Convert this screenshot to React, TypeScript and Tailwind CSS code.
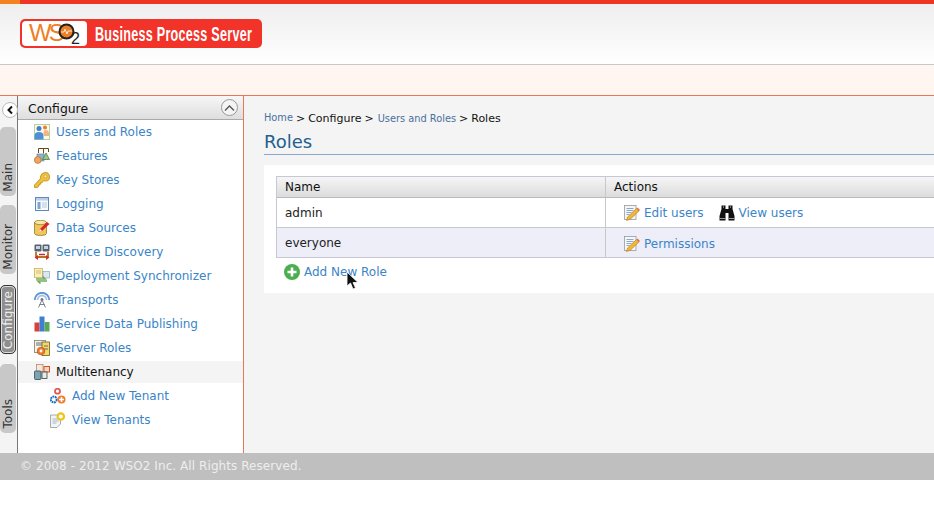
import { ReactNode } from "react";

const font = "font-['DejaVu_Sans',sans-serif]";

function UsersIcon() {
  return (
    <svg width="16" height="16" viewBox="0 0 16 16">
      <rect x="0.500" y="0.500" width="15" height="15" fill="#fff8ea" stroke="#b5d59a" />
      <circle cx="5" cy="4.500" r="2.500" fill="#3b7fcf" />
      <path d="M0.500 15.500v-4q0-3.500 4.500-3.500t4.500 3.500v4z" fill="#4d8fd8" />
      <circle cx="11" cy="3.500" r="2" fill="#ef7a2c" />
      <path d="M9.500 12V9q0-3 2.500-3t3 3v3z" fill="#f3b486" />
    </svg>
  );
}

function FeaturesIcon() {
  return (
    <svg width="16" height="16" viewBox="0 0 16 16">
      <path d="M4.500 5V0.500h10V4M9.500 0.500v5" fill="none" stroke="#6b4a12" />
      <rect x="3" y="6" width="7" height="7" fill="#8fb2d8" stroke="#5c7fa8" strokeWidth="0.600" />
      <path d="M12 5l3.500 6.500h-7z" fill="#9fc48a" stroke="#4c7d43" strokeWidth="0.800" />
      <circle cx="3.800" cy="12" r="3.400" fill="#eea55d" stroke="#b56f2c" strokeWidth="0.700" />
    </svg>
  );
}

function KeyIcon() {
  return (
    <svg width="16" height="16" viewBox="0 0 16 16">
      <path d="M0.500 13l6-6.500-.2-1.500Q7 1 11 0.500t4.500 4-4 4.500l-2-.2-1.500 2H6.500v1.500H5V14l-1.500 1.500H0.500z" fill="#f0bf3c" stroke="#b98a1f" strokeWidth="0.800" />
      <circle cx="11.500" cy="4.300" r="1.300" fill="#fff3c4" stroke="#b98a1f" strokeWidth="0.500" />
    </svg>
  );
}

function LoggingIcon() {
  return (
    <svg width="16" height="16" viewBox="0 0 16 16">
      <rect x="1.500" y="1.500" width="13" height="13" fill="#f6f9fd" stroke="#5f88bc" />
      <rect x="2" y="2" width="12" height="2.500" fill="#b9cfe8" />
      <rect x="3.500" y="6" width="3" height="7" fill="#7fa5d1" />
      <path d="M8 7h5M8 9h5M8 11h5" stroke="#b8c9dc" />
    </svg>
  );
}

function DataIcon() {
  return (
    <svg width="16" height="16" viewBox="0 0 16 16">
      <path d="M0.500 2.500v11q0 2 6 2t6-2v-11z" fill="#eec95a" stroke="#8f6b17" strokeWidth="0.700" />
      <ellipse cx="6.500" cy="2.500" rx="6" ry="2.200" fill="#f8e7a6" stroke="#8f6b17" strokeWidth="0.700" />
      <path d="M5 12l1-3 7-7 2.500 2-7.500 7z" fill="#d8262c" />
      <path d="M5 12l1-3 2 2z" fill="#fff" />
    </svg>
  );
}

function DiscoveryIcon() {
  return (
    <svg width="16" height="16" viewBox="0 0 16 16">
      <rect x="0.500" y="0.500" width="7" height="7" rx="1" fill="#59636e" />
      <rect x="8.500" y="0.500" width="7" height="7" rx="1" fill="#59636e" />
      <rect x="2" y="2" width="4" height="3" fill="#c2d2e2" />
      <rect x="10" y="2" width="4" height="3" fill="#c2d2e2" />
      <path d="M2 8v5h12V8" fill="none" stroke="#bd6c20" strokeWidth="1.800" />
      <path d="M5 10.500h6" stroke="#c8302c" strokeWidth="1.500" />
      <path d="M0.500 13.500L4 11v5zM15.500 13.500L12 11v5z" fill="#c8302c" />
    </svg>
  );
}

function DeployIcon() {
  return (
    <svg width="16" height="16" viewBox="0 0 16 16">
      <rect x="0.500" y="0.500" width="8" height="9" fill="#fbeeb8" stroke="#c2a94e" strokeWidth="0.700" />
      <rect x="9" y="3.500" width="6.500" height="6.500" fill="#dce8f0" stroke="#8aa5ba" strokeWidth="0.700" />
      <path d="M2 3h5M2 5h5" stroke="#c2a94e" strokeWidth="0.700" />
      <path d="M2 11h9l-2.500-2.500M13 13H4l2.500 2.500" fill="none" stroke="#74ad5c" strokeWidth="1.700" />
    </svg>
  );
}

function TransportIcon() {
  return (
    <svg width="16" height="16" viewBox="0 0 16 16">
      <path d="M0.800 8a7.200 7.200 0 0 1 14.400 0" fill="none" stroke="#5f93d6" strokeWidth="1.800" />
      <path d="M3.500 8a4.500 4.500 0 0 1 9 0" fill="none" stroke="#a6c4e8" strokeWidth="1.800" />
      <circle cx="8" cy="7.500" r="1.500" fill="#6d7680" />
      <path d="M8 8l-3.500 7.500M8 8l3.500 7.500M5.500 12.500h5" fill="none" stroke="#7a828a" />
    </svg>
  );
}

function PublishIcon() {
  return (
    <svg width="16" height="16" viewBox="0 0 16 16">
      <rect x="0.500" y="6.500" width="5" height="9" fill="#d9403a" />
      <rect x="5.500" y="0.500" width="5" height="15" fill="#3f7fcf" />
      <rect x="10.500" y="6" width="5" height="9.500" fill="#5aa75a" />
    </svg>
  );
}

function ServerRolesIcon() {
  return (
    <svg width="16" height="16" viewBox="0 0 16 16">
      <rect x="0.500" y="0.500" width="11" height="12" fill="#f4f4f0" stroke="#7c7c72" strokeWidth="0.800" />
      <rect x="8" y="2" width="7.500" height="13.500" fill="#f4d86a" stroke="#6b5b20" strokeWidth="0.800" />
      <path d="M2 3h6M2 5h6M10 6h4M10 9h4" stroke="#6b6b5e" />
      <circle cx="7" cy="11" r="3.800" fill="#ee7c2e" stroke="#b9501a" strokeWidth="0.700" />
      <circle cx="7" cy="11" r="1.400" fill="#fff" />
    </svg>
  );
}

function TenancyIcon() {
  return (
    <svg width="16" height="16" viewBox="0 0 16 16">
      <rect x="2.500" y="0.500" width="6.500" height="7" fill="#f7e6dc" stroke="#a9806a" strokeWidth="0.700" />
      <rect x="10" y="2.500" width="5.500" height="5.500" fill="#f9d5c3" stroke="#d2552a" strokeWidth="1" />
      <rect x="0.500" y="7" width="6.500" height="8.500" rx="1" fill="#7fa3ad" stroke="#3d5a66" strokeWidth="0.900" />
      <rect x="8" y="8" width="5" height="6.500" fill="#e5ece6" stroke="#3f3f3f" strokeWidth="0.800" />
    </svg>
  );
}

function AddTenantIcon() {
  return (
    <svg width="16" height="16" viewBox="0 0 16 16">
      <circle cx="7.500" cy="3.200" r="2.500" fill="#fff" stroke="#dd5c4c" strokeWidth="1.800" />
      <circle cx="3.800" cy="11.500" r="2.900" fill="#fff" stroke="#1e6fb8" strokeWidth="2" strokeDasharray="1.800 0.600" />
      <circle cx="11.500" cy="11.500" r="4" fill="#ee7c2e" />
      <path d="M11.500 9v5M9 11.500h5" stroke="#fff" strokeWidth="1.500" />
    </svg>
  );
}

function ViewTenantIcon() {
  return (
    <svg width="16" height="16" viewBox="0 0 16 16">
      <path d="M0.500 3h10v9l-3.500 3.500H0.500z" fill="#f2f4f6" stroke="#8f979f" strokeWidth="0.800" />
      <path d="M2.500 7h6M2.500 9h6M2.500 11h4" stroke="#8fa9c6" strokeWidth="0.800" />
      <circle cx="10.800" cy="4.500" r="3.200" fill="#fff" stroke="#efc514" strokeWidth="2.200" />
    </svg>
  );
}

function EditIcon() {
  return (
    <svg width="16" height="16" viewBox="0 0 16 16">
      <rect x="0.500" y="0.500" width="11.500" height="14" fill="#f5f6f7" stroke="#9a9a9a" strokeWidth="0.800" />
      <path d="M2.500 3.500h7M2.500 5.500h7M2.500 7.500h5M2.500 9.500h3" stroke="#6c96c8" strokeWidth="0.800" />
      <path d="M2.500 15.500l1-3.500 9-8.500 2.500 2.500-9 8.500z" fill="#f0b63a" stroke="#b9791a" strokeWidth="0.600" />
      <path d="M12.500 3.500l1-1 2.500 2.500-1 1z" fill="#e66b4a" />
    </svg>
  );
}

function BinocularsIcon() {
  return (
    <svg width="16" height="16" viewBox="0 0 16 16">
      <path d="M2.500 0.500h4v3.500h3V0.500h4V4l2 7v4.500H9.500V8h-3v7.500H0.500V11l2-7z" fill="#111" />
      <path d="M0.500 13.500h6M9.500 13.500h6" stroke="#9a9a9a" />
      <path d="M4.500 1v2M11.500 1v2" stroke="#777" />
    </svg>
  );
}

function WsoMark() {
  return (
    <span className="flex items-center h-[25px] w-[65px] bg-white rounded-[4px] relative shrink-0 ml-px">
      <span className="absolute left-[7px] top-0 text-[#ee7f24] text-[24px] tracking-[-3px] leading-[24px] font-['Liberation_Sans',sans-serif]">
        WS
      </span>
      <svg className="absolute left-[36px] top-[2px]" width="17" height="17" viewBox="0 0 17 17">
        <circle cx="8.500" cy="8.500" r="7" fill="#ee7f24" stroke="#222" strokeWidth="2" />
        <path d="M3 9h3l1-3 2 5 1-3h4" fill="none" stroke="#fff" strokeWidth="0.800" />
      </svg>
      <span className="absolute left-[49px] top-[10px] text-[#222] text-[16px] leading-[16px] font-['Liberation_Sans',sans-serif]">
        2
      </span>
    </span>
  );
}

function NavRow({
  icon,
  label,
  sub,
  active,
}: {
  icon: ReactNode;
  label: string;
  sub?: boolean;
  active?: boolean;
}) {
  return (
    <div className="h-[24px] py-px">
      <div
        className={`h-[22px] flex items-center gap-[6px] ${sub ? "pl-[32px]" : "pl-[16px]"} ${active ? "bg-[#f4f4f4] text-[#111]" : "text-[#3a85c8]"}`}
      >
        <span className="w-[16px] h-[16px] shrink-0">{icon}</span>
        <span className="whitespace-nowrap">{label}</span>
      </div>
    </div>
  );
}

function SideTab({
  label,
  mt,
  active,
}: {
  label: string;
  mt: string;
  active?: boolean;
}) {
  return (
    <div
      className={`${mt} h-[69px] w-[16px] rounded-[5px] flex items-end justify-center pb-[4px] ${active ? "bg-[#8e8e8e] border border-[#333] text-[#eee] shadow-[inset_0_0_0_1px_#ddd]" : "bg-[#c8c8c8] text-[#333]"}`}
    >
      <span className="[writing-mode:vertical-rl] rotate-180 whitespace-nowrap text-[12px] leading-[16px]">
        {label}
      </span>
    </div>
  );
}

export default function App() {
  return (
    <div className={`w-[934px] h-[531px] bg-white overflow-hidden text-[12px] text-[#222] ${font}`}>
      <div className="h-[4px] flex bg-[#ee3524]">
        <div className="w-[20px] bg-[#f58220]" />
      </div>
      <div className="h-[60px] bg-gradient-to-b from-[#eeeeee] to-white flex items-center pl-[20px] pb-px">
        <div className="w-[242px] h-[29px] bg-[#f1332a] rounded-[5px] flex items-center pl-px">
          <WsoMark />
          <span className="ml-[8px] text-white text-[20px] font-['Liberation_Sans',sans-serif] font-bold scale-x-[0.63] origin-left whitespace-nowrap tracking-[0.4px]">
            Business Process Server
          </span>
        </div>
      </div>
      <div className="h-[31px] bg-[#fff6f1] border-t border-[#c8c8c8]" />
      <div className="h-[358px] flex border-t border-[#ec7556]">
        <div className="w-[18px] shrink-0 bg-[#f4f4f4] border-r border-[#777] flex flex-col items-start">
          <div className="w-[16px] h-[16px] mt-[6px] ml-[2px] rounded-full bg-white border border-[#bbb] flex items-center justify-center">
            <svg width="8" height="10" viewBox="0 0 8 10">
              <path d="M6 1.500L2.500 5 6 8.500" fill="none" stroke="#111" strokeWidth="2" />
            </svg>
          </div>
          <div className="flex flex-col mt-[9px]">
            <SideTab label="Main" mt="mt-0" />
            <SideTab label="Monitor" mt="mt-[9px]" />
            <SideTab label="Configure" mt="mt-[11px]" active />
            <SideTab label="Tools" mt="mt-[10px]" />
          </div>
        </div>
        <div className="w-[226px] shrink-0 bg-white border-r border-[#ec7556]">
          <div className="h-[24px] bg-gradient-to-b from-[#f7f7f7] to-[#dedede] border-b border-[#aaa] flex items-center justify-between pl-[10px] pr-[5px] text-[#111] text-[12.400px]">
            <span className="mt-[3px]">Configure</span>
            <span className="w-[17px] h-[17px] rounded-full border border-[#999] bg-[#f4f4f4] flex items-center justify-center">
              <svg width="11" height="8" viewBox="0 0 11 8">
                <path d="M1 6.500l4.500-4.500 4.500 4.500" fill="none" stroke="#555" strokeWidth="1.300" />
              </svg>
            </span>
          </div>
          <NavRow icon={<UsersIcon />} label="Users and Roles" />
          <NavRow icon={<FeaturesIcon />} label="Features" />
          <NavRow icon={<KeyIcon />} label="Key Stores" />
          <NavRow icon={<LoggingIcon />} label="Logging" />
          <NavRow icon={<DataIcon />} label="Data Sources" />
          <NavRow icon={<DiscoveryIcon />} label="Service Discovery" />
          <NavRow icon={<DeployIcon />} label="Deployment Synchronizer" />
          <NavRow icon={<TransportIcon />} label="Transports" />
          <NavRow icon={<PublishIcon />} label="Service Data Publishing" />
          <NavRow icon={<ServerRolesIcon />} label="Server Roles" />
          <NavRow icon={<TenancyIcon />} label="Multitenancy" active />
          <NavRow icon={<AddTenantIcon />} label="Add New Tenant" sub />
          <NavRow icon={<ViewTenantIcon />} label="View Tenants" sub />
        </div>
        <div className="flex-1 bg-[#f4f4f4] pl-[20px] pt-[15px] min-w-0">
          <div className="h-[15px] mt-px flex items-center text-[11px] text-[#111] whitespace-nowrap">
            <span className="text-[#4a6f9e] text-[9.800px] -mt-[2px] mr-[3px]">Home</span>
            <span>&gt;</span>
            <span className="ml-[3px] mr-[3px]">Configure</span>
            <span>&gt;</span>
            <span className="text-[#4a6f9e] text-[9.800px] ml-[4px] mr-[3px]">Users and Roles</span>
            <span>&gt;</span>
            <span className="ml-[3px]">Roles</span>
          </div>
          <div className="h-[28px] pt-px text-[18px] leading-[28px] text-[#21608f] border-b border-[#8aa7cc]">
            Roles
          </div>
          <div className="mt-[10px] h-[128px] bg-white pl-[12px] pt-[11px]">
            <div className="border border-[#c8c8d4] border-r-0 text-[#222]">
              <div className="h-[21px] flex bg-gradient-to-b from-[#f6f6f6] to-[#dcdcdc] border-b border-[#bbb]">
                <div className="w-[329px] pl-[8px] border-r border-[#c8c8c8] flex items-center text-[#111]">Name</div>
                <div className="pl-[8px] flex items-center text-[#111]">Actions</div>
              </div>
              <div className="h-[30px] flex border-b border-[#c8c8d4]">
                <div className="w-[329px] pl-[8px] border-r border-[#c8c8c8] flex items-center">admin</div>
                <div className="pl-[18px] flex items-center text-[#3a85c8]">
                  <span className="w-[16px] h-[16px] mr-[4px]"><EditIcon /></span>
                  <span>Edit users</span>
                  <span className="w-[16px] h-[16px] ml-[16px] mr-[3px]"><BinocularsIcon /></span>
                  <span>View users</span>
                </div>
              </div>
              <div className="h-[29px] flex bg-[#eeeef9]">
                <div className="w-[329px] pl-[8px] border-r border-[#c8c8c8] flex items-center">everyone</div>
                <div className="pl-[18px] pt-[2px] flex items-center text-[#3a85c8]">
                  <span className="w-[16px] h-[16px] mr-[4px]"><EditIcon /></span>
                  <span>Permissions</span>
                </div>
              </div>
            </div>
            <div className="h-[27px] pl-[8px] flex items-center gap-[4px] text-[#3a85c8] relative">
              <svg width="16" height="16" viewBox="0 0 16 16">
                <circle cx="8" cy="8" r="8" fill="#4cae50" />
                <path d="M8 3.500v9M3.500 8h9" stroke="#fff" strokeWidth="2.600" />
              </svg>
              <span>Add New Role</span>
              <svg className="absolute left-[70px] top-[13px]" width="13" height="19" viewBox="0 0 13 19">
                <path d="M1 1v14l3.500-3 2.500 6 2.500-1-2.500-5.500H12z" fill="#111" stroke="#fff" strokeWidth="0.800" />
              </svg>
            </div>
          </div>
        </div>
      </div>
      <div className="h-[27px] bg-[#bfbfbf] pl-[20px] pb-[2px] flex items-center text-[#eeeeee] tracking-[0.07px]">
        © 2008 - 2012 WSO2 Inc. All Rights Reserved.
      </div>
    </div>
  );
}
